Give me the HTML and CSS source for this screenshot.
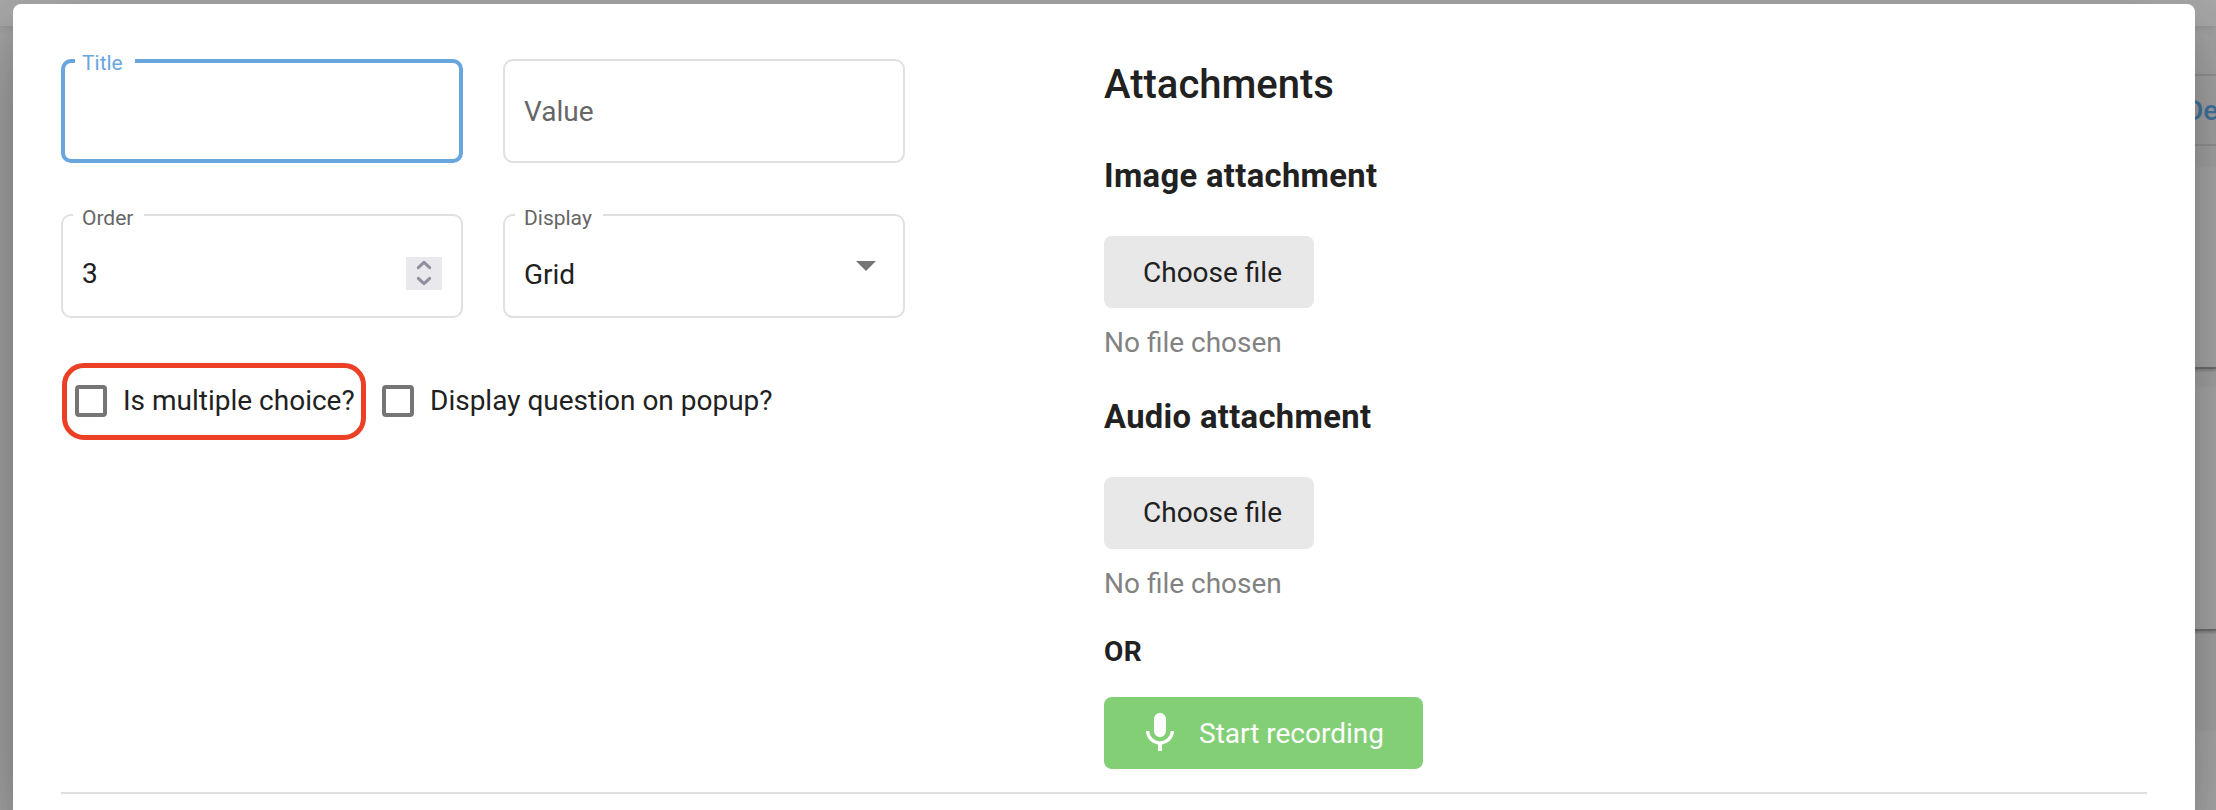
FILE: index.html
```html
<!DOCTYPE html>
<html lang="en">
<head>
<meta charset="utf-8">
<title>Question</title>
<link rel="stylesheet" href="styles.css">
</head>
<body>
<div class="page">
  <header class="page-header"></header>
  <div class="page-toolbar"><span class="page-link">De</span></div>
  <div class="page-panel page-panel-first"></div>
  <div class="page-panel page-panel-second"></div>
  <div class="page-panel page-panel-last"></div>
</div>
<main class="dialog">
  <div class="columns">
    <form class="form">
      <div class="fields">
        <div class="field field-focused">
          <label class="field-label">Title</label>
        </div>
        <div class="field">
          <span class="field-placeholder">Value</span>
        </div>
        <div class="field field-filled">
          <label class="field-label">Order</label>
          <span class="number">3</span>
          <span class="spinner">
            <svg width="36" height="33" viewBox="0 0 36 33" fill="none" stroke="#8f8f9d" stroke-width="3" stroke-linecap="round" stroke-linejoin="round"><path d="M12.3 10.7 18 5.4l5.7 5.3M12.3 21.300 18 26.600l5.700-5.300"/></svg>
          </span>
        </div>
        <div class="field field-filled field-select">
          <label class="field-label">Display</label>
          <span>Grid</span>
          <svg class="arrow" width="20" height="10" viewBox="0 0 20 10"><path d="M0 0h20L10 10z" fill="#757575"/></svg>
        </div>
      </div>
      <div class="checks">
        <label class="check check-marked"><span class="box"></span><span class="check-text">Is multiple choice?</span></label>
        <label class="check"><span class="box"></span><span class="check-text">Display question on popup?</span></label>
      </div>
    </form>
    <section class="attachments">
      <h2 class="heading">Attachments</h2>
      <h3 class="subheading">Image attachment</h3>
      <button class="button"><span class="button-text">Choose file</span></button>
      <p class="hint">No file chosen</p>
      <h3 class="subheading subheading-audio">Audio attachment</h3>
      <button class="button"><span>Choose file</span></button>
      <p class="hint">No file chosen</p>
      <p class="or">OR</p>
      <button class="button button-record">
        <svg width="48" height="48" viewBox="0 0 24 24" fill="#fff"><path d="M12 14c1.660 0 2.990-1.340 2.990-3L15 5c0-1.660-1.340-3-3-3S9 3.340 9 5v6c0 1.660 1.340 3 3 3zm5.300-3c0 3-2.540 5.100-5.300 5.100S6.700 14 6.700 11H5c0 3.410 2.720 6.230 6 6.720V21h2v-3.280c3.280-.480 6-3.300 6-6.720h-1.700z"/></svg>
        <span class="button-text">Start recording</span>
      </button>
    </section>
  </div>
  <hr class="divider">
</main>
</body>
</html>
```
FILE: styles.css
```css
* { box-sizing: border-box; }

body {
  margin: 0;
  height: 810px;
  overflow: hidden;
  position: relative;
  font-family: Roboto, sans-serif;
  font-size: 28px;
  color: #212121;
}

/* Dimmed page behind the dialog */
.page {
  height: 810px;
  display: flex;
  flex-direction: column;
  background: #a6a6a6;
}
.page-header {
  height: 26px;
  flex: none;
  background: #aaa;
  box-shadow: 0 2px 8px rgba(0, 0, 0, .12);
}
.page-toolbar {
  height: 72px;
  flex: none;
  margin: 48px 0 21px 100px;
  border-top: 2px solid #959595;
  border-bottom: 2px solid #959595;
  display: flex;
  align-items: center;
  justify-content: flex-end;
}
.page-link {
  width: 31px;
  color: #4376a3;
  font-weight: 500;
}
.page-panel {
  flex: none;
  margin-left: 100px;
  background: #aaa;
  box-shadow: 0 2px 2px rgba(0, 0, 0, .18);
}
.page-panel-first { height: 202px; border-bottom: 2px solid #717171; }
.page-panel-second { height: 244px; margin-top: 18px; border-bottom: 2px solid #717171; }
.page-panel-last { height: 79px; margin-top: 100px; }

.dialog {
  position: absolute;
  top: 4px;
  left: 13px;
  width: 2182px;
  height: 806px;
  padding: 55px 48px 0;
  border-radius: 8px 8px 0 0;
  background: #fff;
  box-shadow: 0 22px 30px -14px rgba(0, 0, 0, .2), 0 48px 76px 6px rgba(0, 0, 0, .14), 0 18px 92px 16px rgba(0, 0, 0, .12);
}
.columns {
  display: grid;
  grid-template-columns: 1043px 1043px;
  height: 733px;
}

.fields {
  display: grid;
  grid-template-columns: 402px 402px;
  grid-auto-rows: 104px;
  gap: 51px 40px;
}
.field {
  position: relative;
  display: flex;
  align-items: center;
  justify-content: space-between;
  padding: 0 19px;
  border: 2px solid #e0e0e0;
  border-radius: 10px;
}
.field-focused { border: 4px solid #69a6de; }
.field-filled { padding-top: 16px; }
.field-select { padding-right: 27px; }
.field-placeholder { color: #666; }
.field-label {
  position: absolute;
  top: -10px;
  left: 10px;
  padding: 0 11px 0 9px;
  background: #fff;
  color: #666;
  font-size: 21px;
  line-height: 24px;
}
.field-focused .field-label {
  top: -12px;
  padding: 0 12px 0 7px;
  color: #69a6de;
}
.number { margin-top: -2px; }
.spinner {
  width: 36px;
  height: 33px;
  margin-top: -1px;
  background: #e9e9ed;
}
.spinner svg { display: block; }
.arrow { margin-top: -16px; }

.checks {
  display: flex;
  gap: 16px;
  margin: 45px 0 0 1px;
}
.check {
  display: flex;
  align-items: center;
  gap: 16px;
  height: 77px;
  padding-bottom: 1px;
}
.check-marked {
  width: 304px;
  padding-left: 8px;
  border: 5px solid #eb4026;
  border-radius: 22px;
}
.box {
  width: 32px;
  height: 32px;
  border: 4px solid #757575;
  border-radius: 4px;
}
.check span { flex: none; }
.check-text { margin-top: -2px; }

.heading {
  margin: 0;
  padding-top: 2px;
  font-size: 40px;
  font-weight: 500;
  line-height: 48px;
}
.subheading {
  margin: 47px 0 40px;
  font-size: 32.76px;
  font-weight: 700;
  line-height: 40px;
  letter-spacing: .33px;
}
.subheading-audio { margin: 38px 0 40px; }
.button {
  display: flex;
  align-items: center;
  justify-content: center;
  width: 210px;
  height: 72px;
  padding: 0;
  border: 0;
  border-radius: 8px;
  background: #e8e8e8;
  color: #212121;
  font: 400 28px/32px Roboto, sans-serif;
  padding-left: 7px;
}
.button-text { padding-top: 1px; }
.hint {
  margin: 19px 0 0;
  line-height: 32px;
  color: #828282;
}
.or {
  margin: 36px 0 29px;
  line-height: 32px;
  font-weight: 700;
  letter-spacing: .5px;
}
.button-record {
  justify-content: flex-start;
  gap: 15px;
  width: 319px;
  padding-left: 32px;
  background: #82cf76;
  color: #fff;
}
.divider {
  height: 2px;
  margin: 0;
  border: 0;
  background: #e0e0e0;
}
```
